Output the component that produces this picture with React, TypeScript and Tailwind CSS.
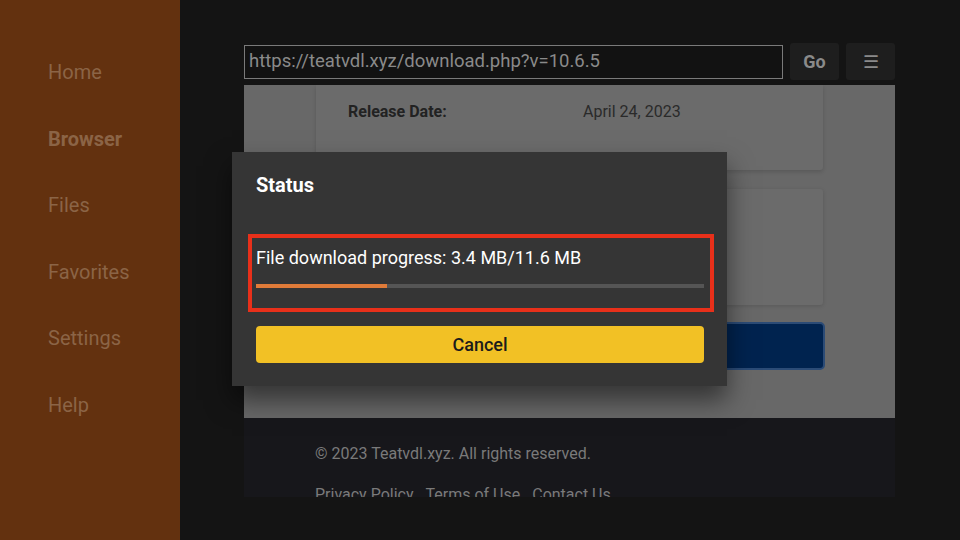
const navItems = ['Home', 'Browser', 'Files', 'Favorites', 'Settings', 'Help']

function Sidebar() {
  return (
    <div className="w-[180px] shrink-0 bg-[#63310f] pt-[56px] pl-[48px]">
      {navItems.map((item) => (
        <div
          key={item}
          className={`h-[66.5px] text-[20px] leading-[32px] text-[#8b6446] ${
            item === 'Browser' ? 'font-bold' : ''
          }`}
        >
          {item}
        </div>
      ))}
    </div>
  )
}

function Toolbar() {
  return (
    <div className="flex items-center gap-[7px] h-[37px]">
      <div className="w-[539px] h-[34px] border border-[#7a7a7a] bg-[#121212] flex items-center pl-[4px] text-[18.5px] text-[#8a8a8a]">
        https://teatvdl.xyz/download.php?v=10.6.5
      </div>
      <div className="w-[49px] h-[37px] rounded-[3px] bg-[#1e1e1e] flex items-center justify-center text-[18px] font-bold text-[#8a8a8a]">
        Go
      </div>
      <div className="w-[49px] h-[37px] rounded-[3px] bg-[#1e1e1e] flex items-center justify-center text-[18px] text-[#8a8a8a]">
        ☰
      </div>
    </div>
  )
}

function WebPage() {
  return (
    <div className="mt-[5px] w-[651px] h-[412px] overflow-hidden">
      <div className="h-[333px] bg-[#686868] pl-[72px] pr-[72px] flex flex-col">
        <div className="w-[507px] h-[85px] bg-[#6b6b6b] shadow-[0_2px_4px_rgba(0,0,0,0.15)] rounded-b-[3px] flex items-start pt-[15px] pl-[32px]">
          <span className="w-[235px] text-[16px] font-bold text-[#222]">Release Date:</span>
          <span className="text-[16px] text-[#2a2a2a]">April 24, 2023</span>
        </div>
        <div className="mt-[19px] w-[507px] h-[116px] bg-[#6b6b6b] shadow-[0_1px_4px_rgba(0,0,0,0.15)] rounded-[3px]" />
        <div className="mt-[17px] w-[509px] h-[48px] bg-[#00234f] border-2 border-[#2b4b76] rounded-[5px]" />
      </div>
      <div className="h-[79px] bg-[#17171b] pl-[71px] pt-[24px] text-[16px] text-[#7a7a7a]">
        <div>© 2023 Teatvdl.xyz. All rights reserved.</div>
        <div className="mt-[17px] flex gap-[12px]">
          <span>Privacy Policy</span>
          <span>Terms of Use</span>
          <span>Contact Us</span>
        </div>
      </div>
    </div>
  )
}

function StatusDialog() {
  const progress = 3.4 / 11.6
  return (
    <div className="absolute left-[232px] top-[152px] w-[495px] h-[234px] bg-[#353535] shadow-[0_14px_24px_rgba(0,0,0,0.5)] pt-[20px]">
      <div className="pl-[24px] text-[20px] font-bold text-white leading-[26px]">Status</div>
      <div className="mt-[36px] ml-[16px] w-[466px] h-[78px] border-[4px] border-[#e8301a] pt-[7px] pl-[4px] pr-[6px]">
        <div className="text-[18px] text-white leading-[26px]">
          File download progress: 3.4 MB/11.6 MB
        </div>
        <div className="mt-[13px] h-[4px] bg-[#555555]">
          <div className="h-full bg-[#e07b39]" style={{ width: `${progress * 100}%` }} />
        </div>
      </div>
      <div className="mt-[14px] ml-[24px] w-[448px] h-[37px] rounded-[4px] bg-[#f2c125] flex items-center justify-center text-[18px] font-medium text-[#1b1b1b]">
        Cancel
      </div>
    </div>
  )
}

export default function App() {
  return (
    <div className="relative w-[960px] h-[540px] overflow-hidden flex bg-[#141414] font-['Roboto',sans-serif]">
      <Sidebar />
      <div className="pl-[64px] pt-[43px]">
        <Toolbar />
        <WebPage />
      </div>
      <StatusDialog />
    </div>
  )
}
